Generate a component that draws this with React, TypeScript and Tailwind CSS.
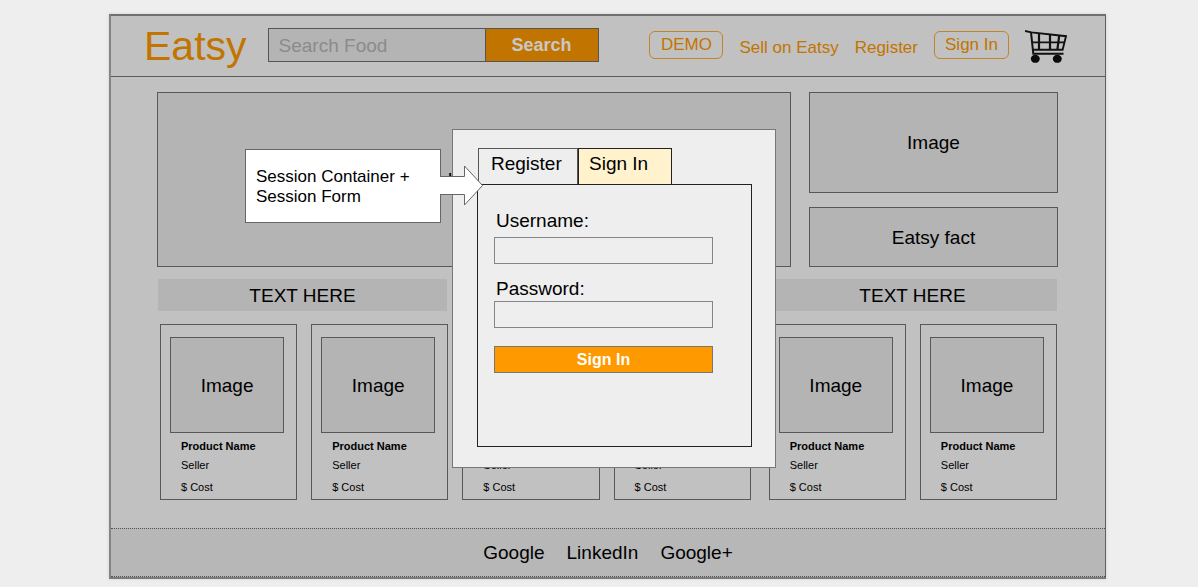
import React from 'react';

const headings = ['TEXT HERE', '', 'TEXT HERE'];
const products = ['', '', '', '', 'ml-1', ''];

function CartIcon() {
  return (
    <svg width="42" height="34" viewBox="0 0 42 34" fill="none" stroke="#111" aria-label="Cart" role="img">
      <path d="M0 1 L6.5 2.4 L41 6.2 L37.6 19.8 H8" strokeWidth="1.9" />
      <path d="M6 2.3 L8.3 23.7 H38.5" strokeWidth="2" />
      <path d="M6.8 12.4 H39" strokeWidth="1.8" />
      <path d="M14 3.5 V19.5 M25 4.6 V19.5 M34.2 5.6 L32.4 19.5" strokeWidth="2.2" />
      <ellipse cx="10.3" cy="28.8" rx="4.5" ry="4" fill="#0b0b0b" stroke="none" />
      <ellipse cx="32.3" cy="28.8" rx="4.5" ry="4" fill="#0b0b0b" stroke="none" />
    </svg>
  );
}

function Header() {
  return (
    <header className="flex h-[61px] items-center border-b border-[#5c5c5c] pb-0.5 pl-[33px] pr-[38px] text-[17px] text-[#c27400]">
      <a href="#home" className="pt-0.5 text-[41px] leading-[48px]">Eatsy</a>
      <form className="ml-[21px] flex h-[34px]" onSubmit={(e) => e.preventDefault()}>
        <input
          aria-label="Search Food"
          placeholder="Search Food"
          className="w-[217px] border border-r-0 border-[#555] bg-[#b4b4b4] px-[10px] pt-0.5 text-[19px] text-black placeholder:text-[#8b8b8b]"
        />
        <button className="w-[114px] border border-[#555] bg-[#c27400] text-[18px] font-bold text-[#c8c8c8]">Search</button>
      </form>
      <nav className="ml-auto flex items-center gap-4">
        <button className="h-7 w-[74px] rounded-md border border-[#c2832b]">DEMO</button>
        <a href="#sell" className="pt-1.5">Sell on Eatsy</a>
        <a href="#register" className="pt-1.5">Register</a>
        <button className="h-7 w-[75px] rounded-md border border-[#c2832b]">Sign In</button>
        <a href="#cart" className="pt-1"><CartIcon /></a>
      </nav>
    </header>
  );
}

function Box({ className, children }: { className: string; children: React.ReactNode }) {
  return (
    <div className={`flex items-center justify-center border border-[#585858] bg-[#b4b4b4] pt-0.5 text-[19px] ${className}`}>
      {children}
    </div>
  );
}

function ProductCard({ className }: { className: string }) {
  return (
    <article className={`h-44 flex-1 border border-[#585858] pl-[9px] pr-3 pt-3 text-[11px] ${className}`}>
      <Box className="h-24">Image</Box>
      <div className="pl-[11px]">
        <h3 className="pt-1 font-bold leading-[18px]">Product Name</h3>
        <p className="pt-px leading-[18px]">Seller</p>
        <p className="pt-1 leading-[18px]">$ Cost</p>
      </div>
    </article>
  );
}

function Callout() {
  return (
    <div className="flex">
      <div className="mt-5 flex h-[74px] w-[196px] items-center border border-[#666] bg-white pl-[10px] pt-0.5 text-[17px] leading-5">
        <p>Session Container +<br />Session Form</p>
      </div>
      <svg className="relative z-10 -ml-px -mr-[31px] mt-9" width="43" height="42" viewBox="0 0 43 42" fill="#fff" stroke="#666">
        <path d="M0 11.5 H24.5 V1 L42.5 20.5 L24.5 40 V29.5 H0" />
      </svg>
    </div>
  );
}

function SessionModal() {
  const field = 'block h-[27px] w-full border border-[#858585] bg-[#eee] px-2';
  return (
    <section role="dialog" aria-label="Sign In" className="h-[339px] w-[324px] border border-[#777] bg-[#eee] pl-6 pr-[23px] pt-[18px] text-[19px]">
      <div role="tablist" className="ml-px flex">
        <button role="tab" aria-selected="false" className="h-9 w-[100px] border border-b-0 border-[#555] pb-1 pl-3 text-left">Register</button>
        <button role="tab" aria-selected="true" className="h-9 w-[94px] border border-b-0 border-[#222] bg-[#fff2cc] pb-1 pl-[10px] text-left">Sign In</button>
      </div>
      <form className="h-[263px] border border-[#222] pl-4 pr-[38px] pt-6" onSubmit={(e) => e.preventDefault()}>
        <label htmlFor="username" className="block h-7 pl-0.5 leading-6">Username:</label>
        <input id="username" className={field} />
        <label htmlFor="password" className="block h-[37px] pl-0.5 pt-[13px] leading-6">Password:</label>
        <input id="password" type="password" className={field} />
        <button className="mt-[18px] block h-[27px] w-full border border-[#777] bg-[#ff9900] text-[16px] font-bold leading-6 text-white">Sign In</button>
      </form>
    </section>
  );
}

export default function App() {
  return (
    <div className="min-h-screen bg-[#eee] pb-2 pl-[109px] pr-[92px] pt-[14px] font-['Liberation_Sans',Arial,sans-serif] text-black">
      <div className="relative border-y-2 border-l-2 border-r border-b-[#7b7b7b] border-l-[#858585] border-r-[#606060] border-t-[#707070] bg-[#c1c1c1] shadow-[0_0_3px_#ccc]">
        <Header />
        <main className="pb-7 pl-[46px] pr-[47px] pt-[15px]">
          <div className="flex gap-[18px]">
            <Box className="h-[175px] flex-1">Image</Box>
            <div className="flex w-[249px] flex-col gap-[14px]">
              <Box className="h-[101px]">Image</Box>
              <Box className="h-[60px]">Eatsy fact</Box>
            </div>
          </div>
          <div className="mt-3 grid grid-cols-3 gap-4 px-px">
            {headings.map((title, i) => (
              <h2 key={i} className="h-8 bg-[#b4b4b4] text-center text-[19px] leading-[34px]">{title}</h2>
            ))}
          </div>
          <div className="mt-[13px] flex gap-[14px] pl-[3px] pr-px">
            {products.map((spacing, i) => <ProductCard key={i} className={spacing} />)}
          </div>
        </main>
        <footer className="flex h-[49px] items-center justify-center gap-[22px] border-y border-dotted border-[#555] bg-[#b7b7b7] pt-0.5 text-[19px]">
          <a href="#google">Google</a>
          <a href="#linkedin">LinkedIn</a>
          <a href="#google-plus">Google+</a>
        </footer>
        <div className="absolute left-[134px] top-[113px] flex items-start">
          <Callout />
          <SessionModal />
        </div>
      </div>
    </div>
  );
}
